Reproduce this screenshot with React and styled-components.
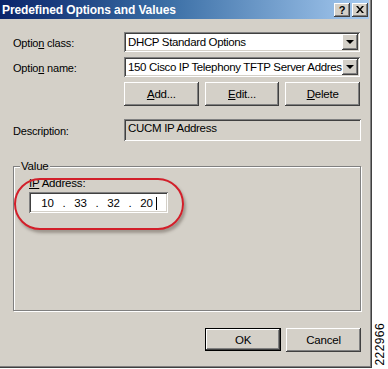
import styled, { createGlobalStyle } from "styled-components";

const GlobalStyle = createGlobalStyle`
  html, body {
    margin: 0;
    padding: 0;
    background: #ffffff;
  }
  body {
    font-family: "Liberation Sans", Arial, sans-serif;
    font-size: 11px;
    letter-spacing: -0.2px;
    color: #000000;
  }
`;

const RAISED = `
  box-shadow: inset -1px -1px #404040, inset 1px 1px #ffffff,
    inset -2px -2px #808080, inset 2px 2px #d4d0c8;
`;

const SUNKEN = `
  box-shadow: inset 1px 1px #808080, inset -1px -1px #ffffff,
    inset 2px 2px #404040, inset -2px -2px #d4d0c8;
`;

const App = () => {
  return (
    <>
      <GlobalStyle />
      <Screen>
        <Dialog>
          <TitleBar>
            <Title>Predefined Options and Values</Title>
            <CaptionButtons>
              <CaptionButton>?</CaptionButton>
              <CaptionButton>
                <svg width="8" height="7" viewBox="0 0 8 7">
                  <path d="M0 0h2l2 2.5L6 0h2L5 3.5 8 7H6L4 4.5 2 7H0l3-3.5z" fill="#000" />
                </svg>
              </CaptionButton>
            </CaptionButtons>
          </TitleBar>

          <Body>
            <FormGrid>
              <Label>
                Optio<u>n</u> class:
              </Label>
              <Combo>
                <ComboText>DHCP Standard Options</ComboText>
                <DropButton>
                  <Arrow />
                </DropButton>
              </Combo>

              <Label>
                Optio<u>n</u> name:
              </Label>
              <Combo>
                <ComboText>150 Cisco IP Telephony TFTP Server Addres</ComboText>
                <DropButton>
                  <Arrow />
                </DropButton>
              </Combo>

              <span />
              <ButtonRow>
                <Button>
                  <u>A</u>dd...
                </Button>
                <Button>
                  <u>E</u>dit...
                </Button>
                <Button>
                  <u>D</u>elete
                </Button>
              </ButtonRow>
            </FormGrid>

            <DescriptionRow>
              <Label>Description:</Label>
              <ReadOnlyField>CUCM IP Address</ReadOnlyField>
            </DescriptionRow>

            <GroupBox>
              <Legend>Value</Legend>
              <FieldLabel>
                <u>IP</u> Address:
              </FieldLabel>
              <IpField>
                <Octet>10</Octet>
                <Dot>.</Dot>
                <Octet>33</Octet>
                <Dot>.</Dot>
                <Octet>32</Octet>
                <Dot>.</Dot>
                <Octet $caret>20</Octet>
              </IpField>
              <Highlight />
            </GroupBox>

            <Footer>
              <Button $default>OK</Button>
              <Button>Cancel</Button>
            </Footer>
          </Body>
        </Dialog>
        <Margin>
          <FigureNumber>222966</FigureNumber>
        </Margin>
      </Screen>
    </>
  );
};

const Screen = styled.div`
  display: flex;
  width: 388px;
  height: 369px;
  overflow: hidden;
`;

const Dialog = styled.div`
  width: 370px;
  height: 367px;
  flex: none;
  display: flex;
  flex-direction: column;
  background-color: #d4d0c8;
  border-right: 1px solid #404040;
  border-bottom: 1px solid #404040;
  box-shadow: inset -1px -1px #808080;
  padding-right: 1px;
`;

const TitleBar = styled.div`
  height: 19px;
  margin-right: 1px;
  display: flex;
  align-items: center;
  justify-content: space-between;
  padding: 0 1px 0 1px;
  background: linear-gradient(to right, #0a246a 0%, #3a6ea5 45%, #a6caf0 100%);
`;

const Title = styled.span`
  color: #ffffff;
  font-weight: bold;
  font-size: 12px;
  letter-spacing: -0.1px;
  padding-left: 1px;
`;

const CaptionButtons = styled.div`
  display: flex;
  gap: 2px;
`;

const CaptionButton = styled.div`
  width: 16px;
  height: 14px;
  display: flex;
  align-items: center;
  justify-content: center;
  background-color: #d4d0c8;
  font-weight: bold;
  font-size: 11px;
  ${RAISED}
`;

const Body = styled.div`
  flex: 1;
  display: flex;
  flex-direction: column;
  padding: 13px 9px 0 13px;
`;

const FormGrid = styled.div`
  display: grid;
  grid-template-columns: 111px 236px;
  grid-auto-rows: 20px;
  row-gap: 5px;
  align-items: center;

  & > :nth-child(5),
  & > :nth-child(6) {
    height: 24px;
    align-self: start;
  }
`;

const Label = styled.span`
  white-space: nowrap;
  padding-top: 1px;
`;

const Combo = styled.div`
  height: 20px;
  display: flex;
  align-items: center;
  background-color: #ffffff;
  padding: 2px;
  box-sizing: border-box;
  ${SUNKEN}
`;

const ComboText = styled.span`
  flex: 1;
  overflow: hidden;
  white-space: nowrap;
  padding-left: 2px;
  font-size: 11.5px;
  letter-spacing: -0.35px;
`;

const DropButton = styled.div`
  width: 16px;
  height: 16px;
  flex: none;
  display: flex;
  align-items: center;
  justify-content: center;
  background-color: #d4d0c8;
  ${RAISED}
`;

const Arrow = styled.span`
  width: 0;
  height: 0;
  border-left: 4px solid transparent;
  border-right: 4px solid transparent;
  border-top: 4px solid #000000;
`;

const ButtonRow = styled.div`
  display: flex;
  gap: 6px;
`;

const Button = styled.div`
  width: ${(p) => (p.$default ? "76px" : "75px")};
  height: ${(p) => (p.$default ? "23px" : "24px")};
  box-sizing: border-box;
  display: flex;
  align-items: center;
  justify-content: center;
  background-color: #d4d0c8;
  font-size: 11.5px;
  ${(p) =>
    p.$default
      ? `border: 1px solid #000000;
         box-shadow: inset -1px -1px #404040, inset 1px 1px #ffffff,
           inset -2px -2px #808080;`
      : RAISED}
`;

const DescriptionRow = styled.div`
  display: grid;
  grid-template-columns: 111px 237px;
  align-items: center;
  margin-top: 17px;
`;

const ReadOnlyField = styled.div`
  height: 22px;
  box-sizing: border-box;
  padding: 3px 4px;
  font-size: 11.5px;
  letter-spacing: -0.3px;
  ${SUNKEN}
`;

const GroupBox = styled.fieldset`
  position: relative;
  margin: 19px 0 0 0;
  width: 348px;
  height: 151px;
  box-sizing: border-box;
  padding: 5px 0 0 15px;
  border: 1px solid #808080;
  box-shadow: 1px 1px 0 #ffffff, inset 1px 1px 0 #ffffff;
  display: flex;
  flex-direction: column;
  align-items: flex-start;
  min-width: 0;
`;

const Legend = styled.legend`
  padding: 0 1px;
  margin-left: -9px;
  font-size: 11.5px;
  background-color: #d4d0c8;
`;

const FieldLabel = styled.span`
  font-size: 11.5px;
`;

const IpField = styled.div`
  margin-top: 3px;
  width: 139px;
  height: 21px;
  box-sizing: border-box;
  padding: 2px 8px 2px 5px;
  display: flex;
  align-items: center;
  background-color: #ffffff;
  font-size: 11.5px;
  ${SUNKEN}
`;

const Octet = styled.span`
  flex: 1;
  text-align: center;
  position: relative;
  ${(p) =>
    p.$caret &&
    `&::after {
      content: "";
      position: absolute;
      right: 3px;
      top: 0;
      width: 1px;
      height: 13px;
      background-color: #000000;
    }`}
`;

const Dot = styled.span`
  width: 6px;
  text-align: center;
`;

const Highlight = styled.div`
  position: absolute;
  left: 0px;
  top: 6px;
  width: 166px;
  height: 48px;
  border: 2px solid #d21f2a;
  border-radius: 26px;
  box-shadow: 2px 3px 3px rgba(90, 80, 70, 0.45);
  pointer-events: none;
`;

const Footer = styled.div`
  display: flex;
  justify-content: flex-end;
  gap: 5px;
  margin-top: 17px;
`;

const Margin = styled.div`
  flex: 1;
  display: flex;
  align-items: flex-end;
  justify-content: center;
  padding-bottom: 4px;
`;

const FigureNumber = styled.span`
  writing-mode: vertical-rl;
  transform: rotate(180deg);
  font-size: 12px;
  letter-spacing: 0.4px;
  line-height: 1;
`;

export default App;
